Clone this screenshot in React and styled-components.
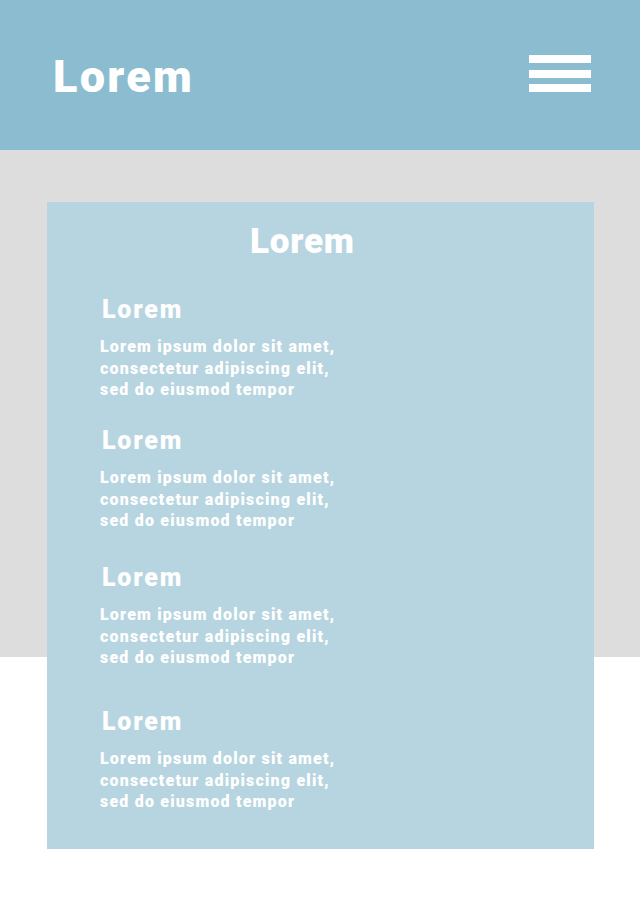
import React from 'react';
import styled, { createGlobalStyle } from 'styled-components';

const GlobalStyle = createGlobalStyle`
  body {
    margin: 0;
    background: #ffffff;
    font-family: Roboto, "Liberation Sans", Arial, sans-serif;
  }
`;

const Page = styled.div`
  width: 640px;
  min-height: 900px;
  background: #ffffff;
`;

const Header = styled.header`
  height: 150px;
  background: #8bbcd0;
  display: flex;
  align-items: center;
  justify-content: space-between;
  padding: 0 49px 0 53px;
  box-sizing: border-box;
`;

const Brand = styled.h1`
  margin: 2px 0 0;
  color: #ffffff;
  font-size: 45px;
  line-height: 1;
  font-weight: 900;
  letter-spacing: 2.3px;
`;

const MenuButton = styled.button`
  width: 62px;
  padding: 0;
  margin: 0 0 3px;
  border: 0;
  background: none;
  display: flex;
  flex-direction: column;
  gap: 6.5px;
  cursor: pointer;
`;

const MenuBar = styled.span`
  display: block;
  height: 8px;
  background: #ffffff;
`;

const Band = styled.main`
  padding: 52px 46px 51px 47px;
  background: linear-gradient(to bottom, #dddddd 0, #dddddd 507px, #ffffff 507px);
`;

const Card = styled.section`
  height: 647px;
  box-sizing: border-box;
  background: #b7d5e0;
  padding: 22px 0 0 53px;
  color: #ffffff;
`;

const CardTitle = styled.h2`
  margin: 0 0 38px;
  padding-left: 150px;
  font-size: 35px;
  line-height: 1;
  font-weight: 900;
  letter-spacing: 0.8px;
`;

const Item = styled.article`
  margin-top: ${(p) => p.$top}px;
  padding-left: ${(p) => p.$indent}px;
`;

const ItemTitle = styled.h3`
  margin: 0 0 14px 2px;
  font-size: 25px;
  line-height: 1;
  font-weight: 900;
  letter-spacing: 1.8px;
`;

const ItemText = styled.p`
  margin: 0;
  font-size: 16px;
  line-height: 21.5px;
  font-weight: 900;
  letter-spacing: 1.2px;
  width: 300px;
`;

const items = [
  { top: 0, indent: 0 },
  { top: 27.5, indent: -1 },
  { top: 33.5, indent: -1 },
  { top: 40.5, indent: 0 },
];

const App = () => (
  <Page>
    <GlobalStyle />
    <Header>
      <Brand>Lorem</Brand>
      <MenuButton aria-label="Menu">
        <MenuBar />
        <MenuBar />
        <MenuBar />
      </MenuButton>
    </Header>
    <Band>
      <Card>
        <CardTitle>Lorem</CardTitle>
        {items.map((item, i) => (
          <Item key={i} $top={item.top} $indent={item.indent}>
            <ItemTitle>Lorem</ItemTitle>
            <ItemText>
              Lorem ipsum dolor sit amet,
              <br />
              consectetur adipiscing elit,
              <br />
              sed do eiusmod tempor
            </ItemText>
          </Item>
        ))}
      </Card>
    </Band>
  </Page>
);

export default App;
